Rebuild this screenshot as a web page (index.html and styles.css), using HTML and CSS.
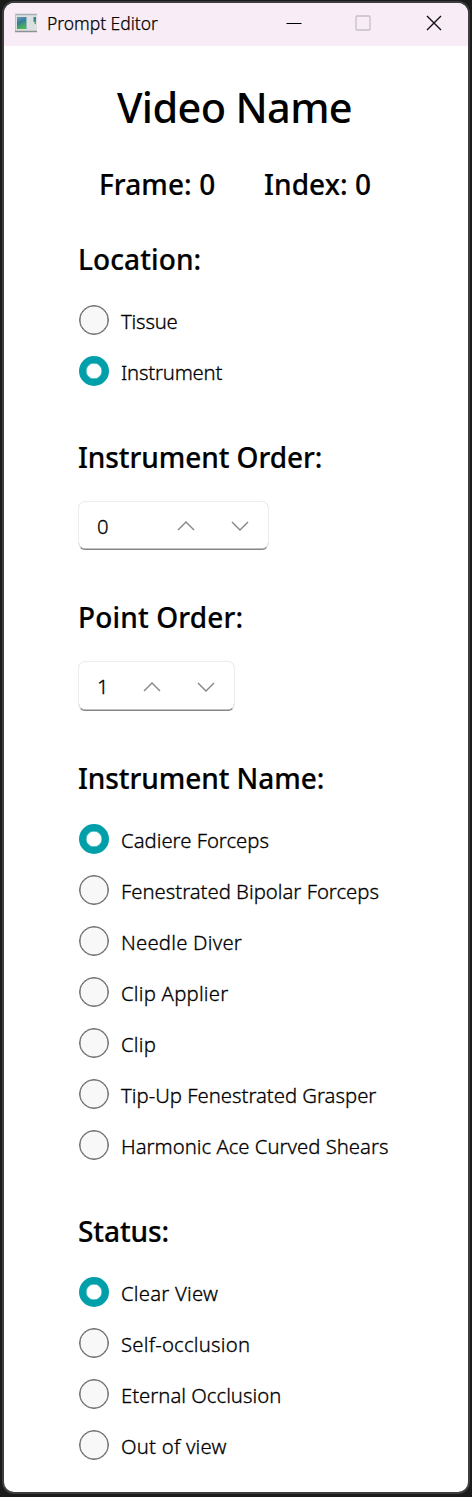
FILE: index.html
```html
<!DOCTYPE html>
<html lang="en">
<head>
<meta charset="utf-8">
<title>Prompt Editor</title>
<link rel="stylesheet" href="styles.css">
</head>
<body>
<div class="window">
  <header class="titlebar">
    <svg class="app-icon" width="24" height="20" viewBox="0 0 24 20">
      <defs><linearGradient id="pane" x1="0" y1="0" x2=".4" y2="1"><stop offset="0" stop-color="#6f9fc0"/><stop offset=".5" stop-color="#347e98"/><stop offset="1" stop-color="#4fb553"/></linearGradient></defs>
      <rect x="1" y="1" width="22" height="17.500" fill="#dcdfdf"/>
      <path d="M1 1.500h22" stroke="#a5b2b3" stroke-width="1.500"/>
      <path d="M1.500 1v17" stroke="#b8c6cb"/>
      <path d="M1 18.500h22" stroke="#8d9295" stroke-width="1.500"/>
      <rect x="3" y="4" width="9" height="12" fill="url(#pane)"/>
      <path d="M12.500 4v12" stroke="#8eb6c5"/>
      <rect x="19.500" y="4" width="2.500" height="5" fill="#427c9b"/>
      <path d="M20.500 8h1.500v3h-1.500z" fill="#53ad62"/>
    </svg>
    <span class="caption">Prompt Editor</span>
    <svg class="control minimize" width="16" height="16" viewBox="0 0 16 16"><path d="M.5 8.500h15" stroke="#000"/></svg>
    <svg class="control maximize" width="16" height="16" viewBox="0 0 16 16"><rect x="1" y="1" width="14" height="14" rx="1" fill="none" stroke="#c5bec5" stroke-width="1.300"/></svg>
    <svg class="control close" width="16" height="16" viewBox="0 0 16 16"><path d="M1 1l14 14M15 1L1 15" stroke="#111" stroke-width="1.400"/></svg>
  </header>
  <main class="content">
    <h1 class="video-name">Video Name</h1>
    <div class="counters"><span>Frame: 0</span><span>Index: 0</span></div>

    <section class="group location">
      <h2>Location:</h2>
      <label class="option"><i class="radio"></i><span>Tissue</span></label>
      <label class="option"><i class="radio checked"></i><span>Instrument</span></label>
    </section>

    <section class="group order">
      <h2>Instrument Order:</h2>
      <div class="spin wide">
        <span class="value">0</span>
        <svg class="up" width="18" height="10" viewBox="0 0 18 10"><path d="M1 9l8-8 8 8"/></svg>
        <svg class="down" width="18" height="10" viewBox="0 0 18 10"><path d="M1 1l8 8 8-8"/></svg>
      </div>
    </section>

    <section class="group order point">
      <h2>Point Order:</h2>
      <div class="spin narrow">
        <span class="value">1</span>
        <svg class="up" width="18" height="10" viewBox="0 0 18 10"><path d="M1 9l8-8 8 8"/></svg>
        <svg class="down" width="18" height="10" viewBox="0 0 18 10"><path d="M1 1l8 8 8-8"/></svg>
      </div>
    </section>

    <section class="group instrument">
      <h2>Instrument Name:</h2>
      <label class="option"><i class="radio checked"></i><span>Cadiere Forceps</span></label>
      <label class="option"><i class="radio"></i><span>Fenestrated Bipolar Forceps</span></label>
      <label class="option short"><i class="radio"></i><span>Needle Diver</span></label>
      <label class="option short"><i class="radio"></i><span>Clip Applier</span></label>
      <label class="option short"><i class="radio"></i><span>Clip</span></label>
      <label class="option"><i class="radio"></i><span>Tip-Up Fenestrated Grasper</span></label>
      <label class="option"><i class="radio"></i><span>Harmonic Ace Curved Shears</span></label>
    </section>

    <section class="group status">
      <h2>Status:</h2>
      <label class="option short"><i class="radio checked"></i><span>Clear View</span></label>
      <label class="option short"><i class="radio"></i><span>Self-occlusion</span></label>
      <label class="option"><i class="radio"></i><span>Eternal Occlusion</span></label>
      <label class="option short"><i class="radio"></i><span>Out of view</span></label>
    </section>
  </main>
</div>
</body>
</html>
```
FILE: styles.css
```css
* { box-sizing: border-box; }
html, body { margin: 0; height: 1497px; }
body {
  background: #1b1b1b;
  padding: 1px 2px 3px 2px;
  font-family: "Noto Sans", "Open Sans", sans-serif;
  color: #000;
  overflow: hidden;
}
.window {
  height: 1493px;
  border: 2px solid #3d3d3d;
  border-radius: 12px;
  background: #fff;
  overflow: hidden;
}
.titlebar {
  height: 43px;
  background: #f8edf6;
  display: flex;
  align-items: center;
  padding: 0 0 3px 10px;
}
.app-icon { flex: none; }
.caption {
  margin-left: 9px;
  width: 239px;
  font-size: 17.5px;
  font-weight: 350;
  letter-spacing: -0.03px;
  line-height: 24px;
  -webkit-text-stroke: 0.25px #000;
}
.control { flex: none; }
.maximize { margin-left: 53px; }
.close { margin-left: 55px; }
.content { padding: 31px 0 0 74px; }
.video-name {
  margin: 0 0 0 39px;
  font-size: 41.5px;
  line-height: 60px;
  font-weight: 500;
  letter-spacing: -0.65px;
  white-space: nowrap;
}
.counters {
  margin: 27px 0 35px 21px;
  display: flex;
  font-size: 28px;
  line-height: 40px;
  font-weight: 500;
  letter-spacing: 0.08px;
  -webkit-text-stroke: 0.2px #000;
}
.counters span:first-child { width: 165px; }
.group h2 {
  margin: 0 0 14px;
  font-size: 28px;
  line-height: 40px;
  font-weight: 500;
  letter-spacing: -0.07px;
  white-space: nowrap;
  -webkit-text-stroke: 0.2px #000;
}
.location { height: 199px; }
.group.location h2 { letter-spacing: 0.1px; margin-bottom: 15px; }
.order { height: 160px; }
.group.point h2 { letter-spacing: 0.15px; }
.order + .instrument { margin-top: 1px; }
.instrument { height: 453px; }
.group.order h2 { margin-bottom: 23px; position: relative; top: -1px; }
.group.instrument h2, .group.status h2 { position: relative; top: -1px; }
.option {
  display: flex;
  align-items: center;
  height: 51px;
  font-size: 20.3px;
  font-weight: 350;
  line-height: 30px;
  white-space: nowrap;
  -webkit-text-stroke: 0.3px #000;
}
.option.short { letter-spacing: 0.22px; }
.location .option { letter-spacing: -0.2px; }
.option span { padding-top: 2px; }
.radio {
  flex: none;
  width: 30px;
  height: 30px;
  margin: 0 12px 0 1px;
  border: 1px solid #686868;
  box-shadow: inset 0 0 0 0.5px #686868;
  border-radius: 50%;
  background: #f8f8f8;
}
.radio.checked {
  border: 7px solid #009faa;
  box-shadow: inset 0 0 0 0.4px #009faa;
  background: #fff;
}
.spin {
  height: 49px;
  display: flex;
  align-items: center;
  padding: 1px 0 0 18px;
  border: 1px solid #ececec;
  border-bottom: 1px solid #858585;
  box-shadow: inset 0 -0.5px 0 #858585;
  border-radius: 7px;
}
.spin svg { flex: none; fill: none; stroke: #858585; stroke-width: 1.4; }
.value {
  font-size: 20.3px;
  font-weight: 350;
  line-height: 30px;
  padding-bottom: 1px;
  -webkit-text-stroke: 0.3px #000;
}
.down { margin-left: 36px; }
.wide { width: 191px; }
.wide .value { width: 80px; }
.narrow { width: 157px; height: 50px; }
.narrow .value { width: 46px; padding-bottom: 2px; }
```
